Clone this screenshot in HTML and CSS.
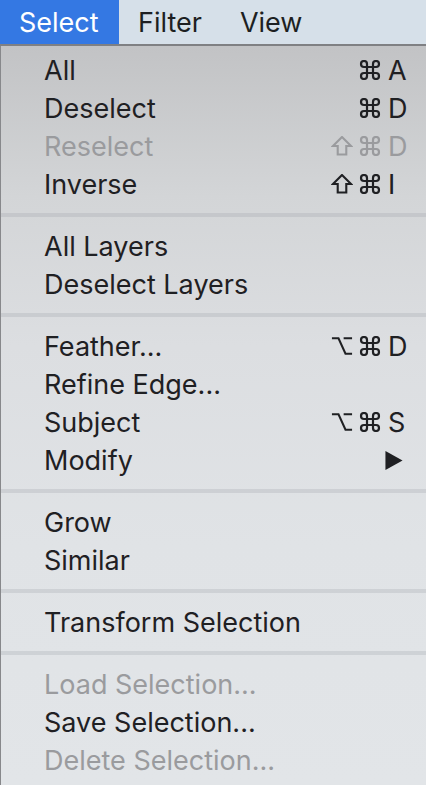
FILE: index.html
```html
<!DOCTYPE html>
<html>
<head>
<meta charset="utf-8">
<link rel="stylesheet" href="styles.css">
</head>
<body>
<div class="menubar">
  <div class="mb-item active">Select</div>
  <div class="mb-item">Filter</div>
  <div class="mb-item">View</div>
</div>
<div class="menu">
  <div class="row">
    <span class="label">All</span>
    <span class="key">
      <svg class="mod" viewBox="2 2 20 20"><path d="M15 6v12a3 3 0 1 0 3-3H6a3 3 0 1 0 3 3V6a3 3 0 1 0-3 3h12a3 3 0 1 0-3-3"/></svg>
      <span class="letter">A</span>
    </span>
  </div>
  <div class="row">
    <span class="label">Deselect</span>
    <span class="key">
      <svg class="mod" viewBox="2 2 20 20"><path d="M15 6v12a3 3 0 1 0 3-3H6a3 3 0 1 0 3 3V6a3 3 0 1 0-3 3h12a3 3 0 1 0-3-3"/></svg>
      <span class="letter">D</span>
    </span>
  </div>
  <div class="row disabled">
    <span class="label">Reselect</span>
    <span class="key">
      <svg class="mod" viewBox="1.5 1.5 21 21"><path d="M12 2.5L21.5 12H16.5V21H7.5V12H2.5Z"/></svg>
      <svg class="mod" viewBox="2 2 20 20"><path d="M15 6v12a3 3 0 1 0 3-3H6a3 3 0 1 0 3 3V6a3 3 0 1 0-3 3h12a3 3 0 1 0-3-3"/></svg>
      <span class="letter">D</span>
    </span>
  </div>
  <div class="row">
    <span class="label">Inverse</span>
    <span class="key">
      <svg class="mod" viewBox="1.5 1.5 21 21"><path d="M12 2.5L21.5 12H16.5V21H7.5V12H2.5Z"/></svg>
      <svg class="mod" viewBox="2 2 20 20"><path d="M15 6v12a3 3 0 1 0 3-3H6a3 3 0 1 0 3 3V6a3 3 0 1 0-3 3h12a3 3 0 1 0-3-3"/></svg>
      <span class="letter">I</span>
    </span>
  </div>
  <div class="sep"></div>
  <div class="row"><span class="label">All Layers</span></div>
  <div class="row"><span class="label">Deselect Layers</span></div>
  <div class="sep"></div>
  <div class="row">
    <span class="label">Feather...</span>
    <span class="key">
      <svg class="mod" viewBox="0.5 2.5 23.5 19.5"><path d="M1.5 4H8.5L16 20.5H23M14 4H23"/></svg>
      <svg class="mod" viewBox="2 2 20 20"><path d="M15 6v12a3 3 0 1 0 3-3H6a3 3 0 1 0 3 3V6a3 3 0 1 0-3 3h12a3 3 0 1 0-3-3"/></svg>
      <span class="letter">D</span>
    </span>
  </div>
  <div class="row"><span class="label">Refine Edge...</span></div>
  <div class="row">
    <span class="label">Subject</span>
    <span class="key">
      <svg class="mod" viewBox="0.5 2.5 23.5 19.5"><path d="M1.5 4H8.5L16 20.5H23M14 4H23"/></svg>
      <svg class="mod" viewBox="2 2 20 20"><path d="M15 6v12a3 3 0 1 0 3-3H6a3 3 0 1 0 3 3V6a3 3 0 1 0-3 3h12a3 3 0 1 0-3-3"/></svg>
      <span class="letter">S</span>
    </span>
  </div>
  <div class="row">
    <span class="label">Modify</span>
    <span class="key">
      <svg class="arrow" viewBox="0 0 18 20"><path d="M0 0L18 10L0 20Z"/></svg>
    </span>
  </div>
  <div class="sep"></div>
  <div class="row"><span class="label">Grow</span></div>
  <div class="row"><span class="label">Similar</span></div>
  <div class="sep"></div>
  <div class="row"><span class="label">Transform Selection</span></div>
  <div class="sep"></div>
  <div class="row disabled"><span class="label">Load Selection...</span></div>
  <div class="row"><span class="label">Save Selection...</span></div>
  <div class="row disabled"><span class="label">Delete Selection...</span></div>
</div>
</body>
</html>
```
FILE: styles.css
```css
html, body {
  margin: 0;
  padding: 0;
}
body {
  width: 426px;
  height: 785px;
  overflow: hidden;
  font-family: Inter, "Liberation Sans", sans-serif;
  color: #1f2023;
  background: #e1e4e7;
}
.menubar {
  display: flex;
  height: 44px;
  background: #d6e0e9;
  border-bottom: 2px solid #7f8083;
}
.mb-item {
  display: flex;
  align-items: center;
  font-size: 27px;
  height: 44px;
  color: #1d1f22;
  padding: 0 19px;
}
.mb-item.active {
  background: #3478e3;
  color: #ffffff;
  box-sizing: border-box;
  width: 119px;
  padding: 0 0 0 19px;
}
.menu {
  height: 739px;
  box-sizing: border-box;
  padding-top: 5px;
  border-left: 1px solid #87888b;
  background: linear-gradient(to bottom, #c2c3c5 0px, #d3d5d7 150px, #dcdee1 300px, #e0e3e6 500px, #e2e5e8 739px);
}
.row {
  height: 38px;
  display: flex;
  align-items: center;
  justify-content: space-between;
  padding: 0 21px 0 43px;
  font-size: 27px;
}
.row.disabled {
  color: #9a9b9e;
}
.key {
  display: flex;
  align-items: center;
}
.mod {
  width: 22px;
  height: 20px;
  margin-left: 6px;
  fill: none;
  stroke: currentColor;
  stroke-width: 2.2;
  stroke-linejoin: miter;
}
.letter {
  display: inline-block;
  width: 17px;
  margin-left: 7px;
  text-align: left;
}
.arrow {
  width: 18px;
  height: 19px;
  fill: currentColor;
  margin-right: 2px;
}
.sep {
  height: 4px;
  margin: 10px 0;
  background: rgba(150, 155, 162, 0.25);
}
```
